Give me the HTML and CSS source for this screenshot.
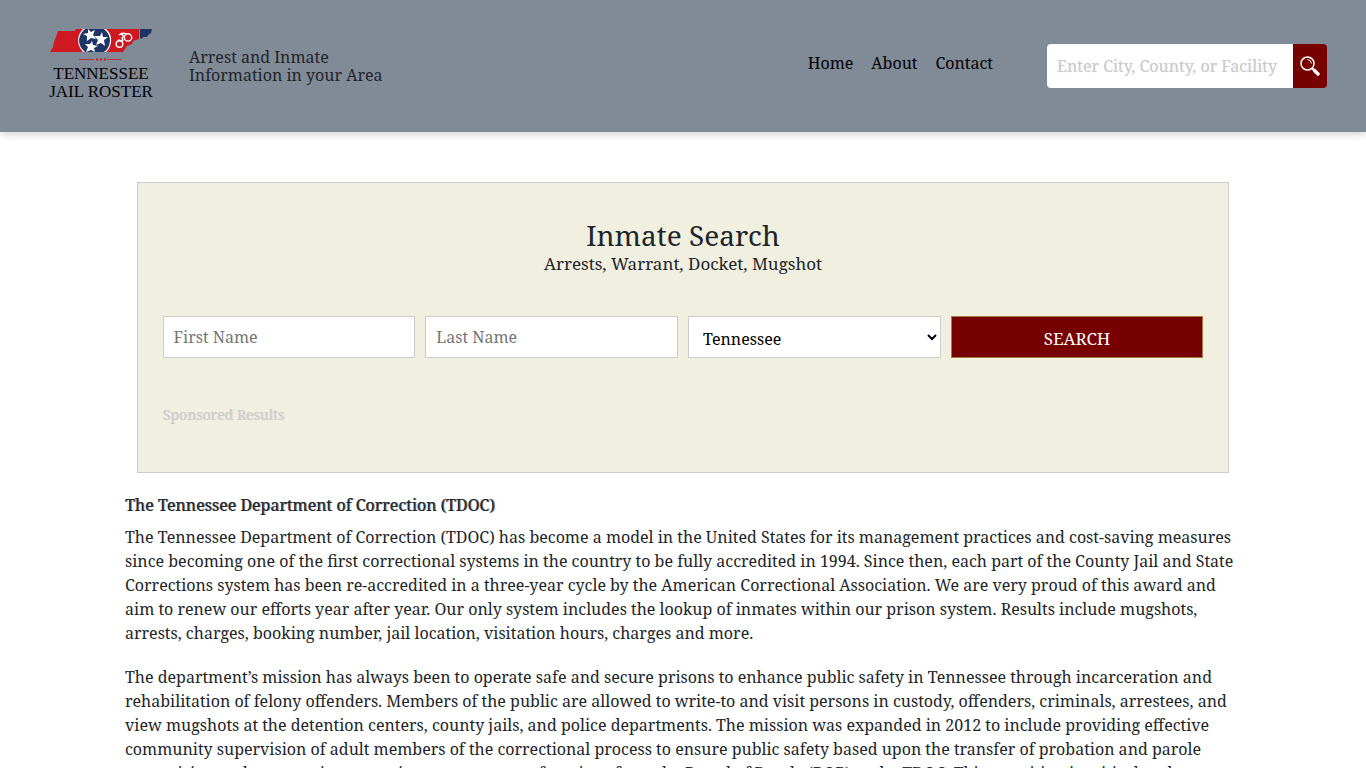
FILE: index.html
```
<!DOCTYPE html>
<html lang="en">
<head>
<meta charset="utf-8">
<title>Tennessee Jail Roster</title>
<link rel="stylesheet" href="styles.css">
</head>
<body>
<header class="site-header">
  <a class="brand" href="#" aria-label="Tennessee Jail Roster">
    <svg class="brand-map" viewBox="0 0 106 34" aria-hidden="true">
      <path fill="#cf1920" d="M10 3 L27 3 28 1 91 1 91 11 88 12 85 13 84 16 79 18 77 21 75 24 2 24 5 19 6 14 8 9Z"/>
      <path fill="#1f3568" d="M92 1 H104 L103 5 100 7 99 9 95 9 94 11 92 10Z"/>
      <path fill="#fff" d="M35 1 H58 Q64 6 63 14 Q62 21 58 24 H35 Q30 19 30 11 Q31 5 35 1Z"/>
      <path fill="#1f3568" d="M37 1 H56 Q62 6 62 13 Q61 21 56 24 H37 Q31 19 31 12 Q32 5 37 1Z"/>
      <g fill="#fff">
        <path d="M40 1 L43 4 47 2 45 7 48 11 43 10 39 13 39 8 35 6 40 5Z"/>
        <path d="M54 4 L55 9 60 9 56 12 57 18 53 15 48 17 50 12 46 8 52 8Z"/>
        <path d="M44 13 L45 17 50 18 46 20 47 24 43 22 38 24 40 19 37 16 42 16Z"/>
      </g>
      <g fill="none" stroke="#fff" stroke-width="1.400">
        <circle cx="71.500" cy="16" r="3.300"/><circle cx="80" cy="9.500" r="3.700"/>
        <path d="M70 12 L74 13 M73 5 L76 9 M71 7 Q75 4 78 6 M75 13 L74 9"/>
      </g>
      <path stroke="#c22f38" stroke-width="1" d="M31 31.500H46M59 31.500H74"/>
      <path stroke="#cf1920" stroke-width="2" stroke-dasharray="2 2" d="M48 31.500H58"/>
    </svg>
    <span class="brand-name">TENNESSEE<br>JAIL ROSTER</span>
  </a>
  <p class="tagline">Arrest and Inmate<br>Information in your Area</p>
  <nav class="menu" aria-label="Main">
    <a href="#">Home</a><a href="#">About</a><a href="#">Contact</a>
  </nav>
  <form class="site-search" role="search">
    <input type="text" aria-label="Enter City, County, or Facility" placeholder="Enter City, County, or Facility">
    <button type="button" aria-label="Search">
      <svg viewBox="0 0 20 20" aria-hidden="true"><circle cx="7.500" cy="7.500" r="6.500" fill="none" stroke="#fff" stroke-width="1.500"/><path d="M7.500 3.500Q11 4 11.500 7.500" fill="none" stroke="#fff"/><path d="M12 12L14 14" stroke="#fff" stroke-width="2"/><path d="M14.500 14.500L18 18" stroke="#fff" stroke-width="3.500" stroke-linecap="round"/></svg>
    </button>
  </form>
</header>
<main>
  <section class="finder">
    <h1>Inmate Search</h1>
    <p class="finder-sub">Arrests, Warrant, Docket, Mugshot</p>
    <form class="finder-form">
      <input type="text" aria-label="First Name" placeholder="First Name">
      <input type="text" aria-label="Last Name" placeholder="Last Name">
      <select aria-label="State"><option>Tennessee</option></select>
      <button type="button">SEARCH</button>
    </form>
    <p class="sponsored">Sponsored Results</p>
  </section>
  <article class="content">
    <h2>The Tennessee Department of Correction (TDOC)</h2>
    <p>The Tennessee Department of Correction (TDOC) has become a model in the United States for its management practices and cost-saving measures since becoming one of the first correctional systems in the country to be fully accredited in 1994. Since then, each part of the County Jail and State Corrections system has been re-accredited in a three-year cycle by the American Correctional Association. We are very proud of this award and aim to renew our efforts year after year. Our only system includes the lookup of inmates within our prison system. Results include mugshots, arrests, charges, booking number, jail location, visitation hours, charges and more.</p>
    <p>The department’s mission has always been to operate safe and secure prisons to enhance public safety in Tennessee through incarceration and rehabilitation of felony offenders. Members of the public are allowed to write-to and visit persons in custody, offenders, criminals, arrestees, and view mugshots at the detention centers, county jails, and police departments. The mission was expanded in 2012 to include providing effective community supervision of adult members of the correctional process to ensure public safety based upon the transfer of probation and parole supervision and community corrections management functions from the Board of Parole (BOP) to the TDOC. This transition is critical to the</p>
  </article>
</main>
</body>
</html>
```
FILE: styles.css
```
* { box-sizing: border-box; }
body { margin: 0; font: 16px/24px "Noto Serif", "Droid Serif", "Liberation Serif", serif; color: #212529; background: #fff; }
p, h1, h2 { margin: 0; font-weight: 400; }
input, select, button { font: inherit; }
.site-header { display: flex; align-items: flex-start; padding: 28px 39px 28px 48px; background: #818a97; box-shadow: 0 0 10px #0004; }
.brand { display: flex; flex-direction: column; width: 106px; color: #000; text-decoration: none; text-align: center; }
.brand-map { width: 106px; height: 34px; }
.brand-name { font: 17px/18px "Liberation Serif", serif; padding: 3px 0; white-space: nowrap; }
.tagline { margin: 20px 0 0 35px; line-height: 18px; }
.menu { display: flex; gap: 18px; margin: 23px 54px 0 auto; }
.menu a { color: #000; text-decoration: none; }
.site-search { display: flex; width: 280px; height: 44px; margin-top: 16px; border-radius: 4px; overflow: hidden; }
.site-search input { flex: 1; min-width: 0; border: 0; padding: 0 10px; background: #fff; }
.site-search input::placeholder { color: #ccc; opacity: 1; text-shadow: 0 0 1px #ccc9; }
.site-search button { width: 34px; padding: 0; border: 0; background: #700; display: grid; place-items: center; }
.site-search svg { width: 20px; height: 20px; }
.finder { width: 80%; margin: 50px auto 0; padding: 35px 25px 45px; background: #f0efe0; border: 1px solid #ccc; }
.finder h1 { font-size: 28px; line-height: 34px; text-align: center; }
.finder-sub { text-align: center; font-size: 17px; }
.finder-form { display: grid; grid-template-columns: repeat(4, 1fr); gap: 10px; margin: 40px 0 45px; }
.finder-form > * { height: 42px; min-width: 0; border: 1px solid #ccc; border-radius: 0; padding: 0 10px; background: #fff; }
.finder-form select { padding-top: 4px; }
.finder-form button { padding-top: 4px; background: #700; color: #fff; border-color: #a67c3c; font-size: 17px; }
.sponsored { font-size: 14px; color: #ccc; text-shadow: 1px 0 #ccc9; }
.content { width: 1116px; max-width: 90%; margin: 20px auto 0; }
.content h2 { font-size: 16px; line-height: 24px; margin-bottom: 8px; text-shadow: 1px 0 #2125299a; }
.content p { margin-bottom: 20px; }
```
